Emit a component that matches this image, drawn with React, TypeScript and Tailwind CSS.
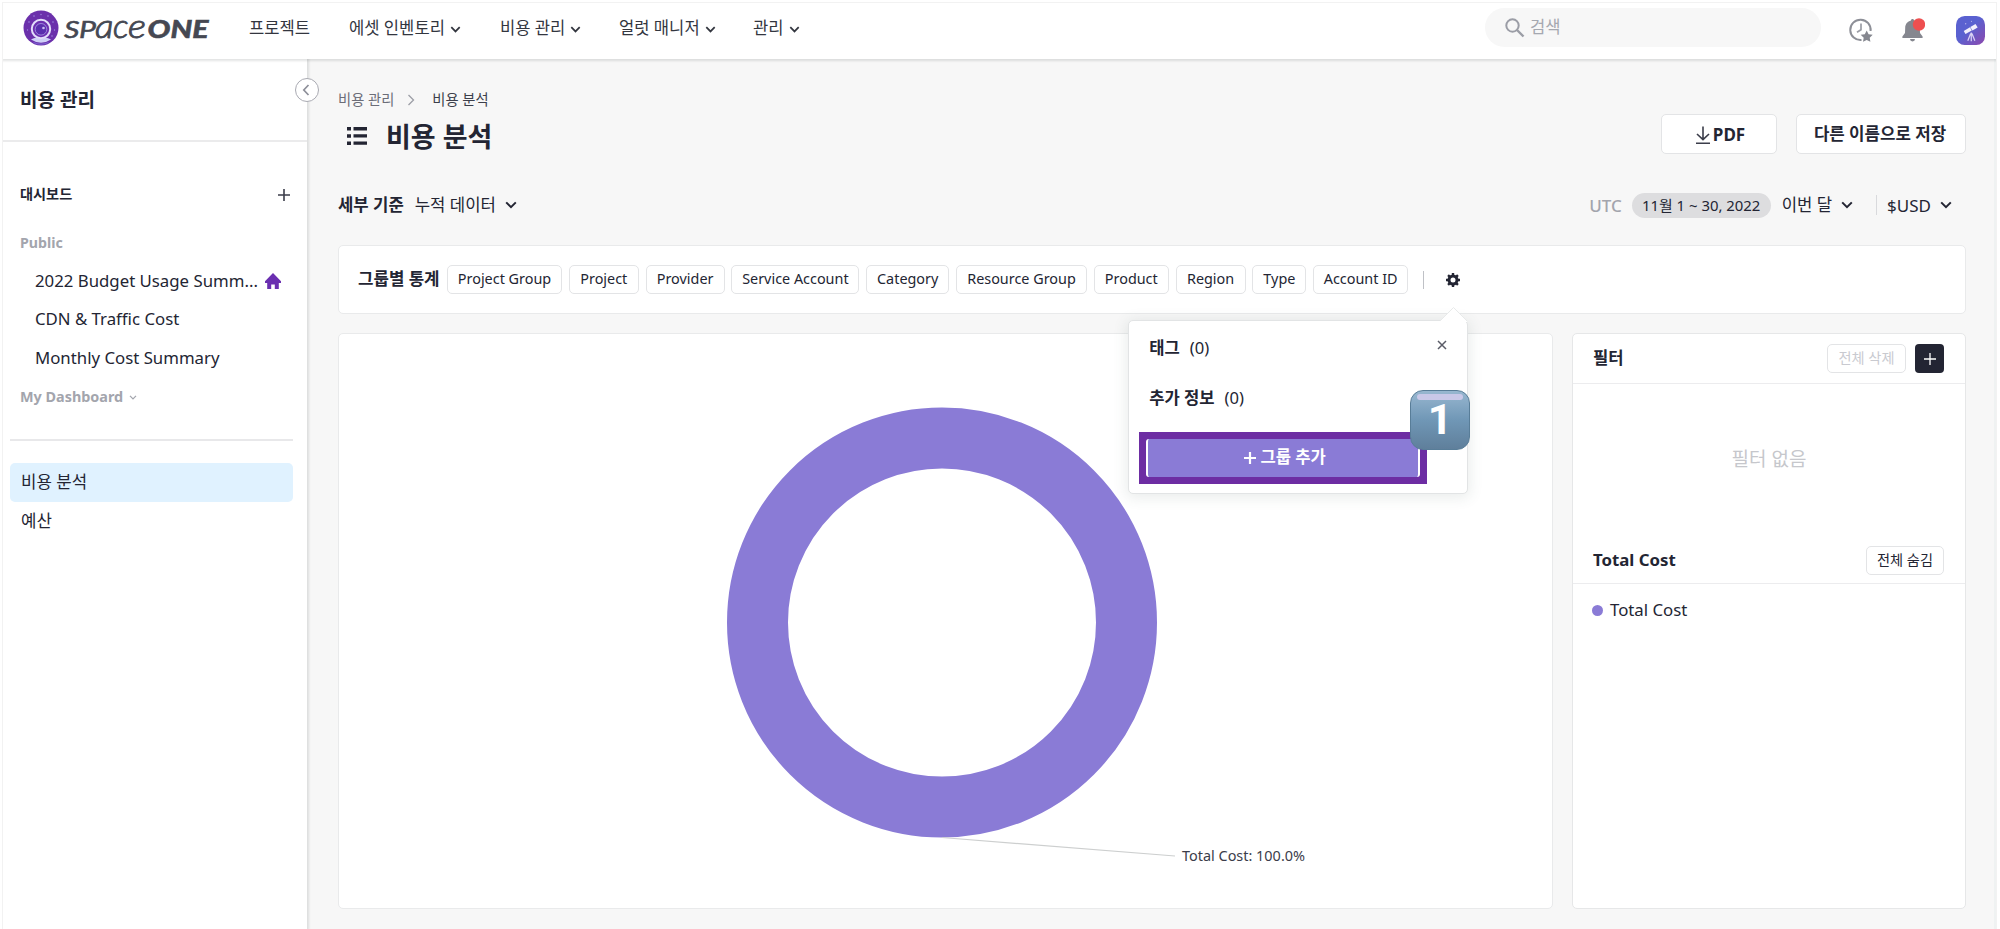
import type { ReactNode } from 'react'
import clsx from 'clsx'

type NavItem = {
  label: string
  className: string
  hasMenu?: boolean
}

const navItems: NavItem[] = [
  { label: '프로젝트', className: 'w-[100px]' },
  { label: '에셋 인벤토리', className: 'w-[151px]', hasMenu: true },
  { label: '비용 관리', className: 'w-[119px]', hasMenu: true },
  { label: '얼럿 매니저', className: 'w-[134px]', hasMenu: true },
  { label: '관리', className: 'w-[60px]', hasMenu: true },
]

const dashboards = ['2022 Budget Usage Summ...', 'CDN & Traffic Cost', 'Monthly Cost Summary']

const groupOptions = [
  { label: 'Project Group', className: 'w-[115px]' },
  { label: 'Project', className: 'w-[70px]' },
  { label: 'Provider', className: 'w-[79px]' },
  { label: 'Service Account', className: 'w-[128px]' },
  { label: 'Category', className: 'w-[83px]' },
  { label: 'Resource Group', className: 'w-[131px]' },
  { label: 'Product', className: 'w-[75px]' },
  { label: 'Region', className: 'w-[70px]' },
  { label: 'Type', className: 'w-[54px]' },
  { label: 'Account ID', className: 'w-[95px]' },
]

function Chevron({ className }: { className?: string }) {
  return (
    <svg viewBox="0 0 12 8" fill="none" className={clsx('shrink-0', className)}>
      <path d="M1.2 1.4 6 6.2l4.8-4.8" stroke="currentColor" strokeWidth="2" />
    </svg>
  )
}

function Logo() {
  return (
    <svg viewBox="0 0 194 40" className="h-10 w-[194px] shrink-0 overflow-visible">
      <circle cx="18" cy="18" r="17.5" fill="#6b30ab" />
      <path d="M8 29.5c5-3 15-3 20 0a17.5 17.5 0 0 1-20 0Z" fill="#cfd0f7" />
      <path d="M10.5 32.5c5 2.300 10 2.300 15 0" stroke="#7b62d0" strokeWidth="1.200" fill="none" />
      <circle cx="18" cy="19" r="9.200" fill="#6b2fb0" stroke="#e3defa" strokeWidth="2" />
      <circle cx="18" cy="19.300" r="5.800" fill="#5a2fae" stroke="#a99be6" strokeWidth="0.800" />
      <circle cx="20.500" cy="18" r="1.300" fill="#c9bff2" />
      <g fill="#9c85de">
        <circle cx="6" cy="12" r="0.800" />
        <circle cx="11" cy="6" r="0.800" />
        <circle cx="18" cy="4.500" r="0.700" />
        <circle cx="25" cy="6" r="0.800" />
        <circle cx="30" cy="12" r="0.800" />
        <circle cx="4.500" cy="20" r="0.700" />
        <circle cx="31.500" cy="20" r="0.700" />
        <circle cx="29" cy="26" r="0.800" />
      </g>
      <g
        fill="#454852"
        stroke="#454852"
        fontFamily="Lato, 'Open Sans', sans-serif"
        fontStyle="italic"
      >
        <g fontSize="23.500" strokeWidth="0.500">
          <text x="41" y="27.500" textLength="15.500" lengthAdjust="spacingAndGlyphs">
            S
          </text>
          <text x="56" y="27.500" textLength="17" lengthAdjust="spacingAndGlyphs">
            P
          </text>
        </g>
        <g fontSize="32.500" fontWeight="300" strokeWidth="0.900">
          <text x="72" y="27.500" textLength="18.500" lengthAdjust="spacingAndGlyphs">
            a
          </text>
          <text x="90" y="27.500" textLength="15.500" lengthAdjust="spacingAndGlyphs">
            c
          </text>
          <text x="105" y="27.500" textLength="18" lengthAdjust="spacingAndGlyphs">
            e
          </text>
        </g>
        <text
          x="124.500"
          y="27.500"
          fontSize="24.500"
          fontWeight="900"
          strokeWidth="0.500"
          textLength="61"
          lengthAdjust="spacingAndGlyphs"
        >
          ONE
        </text>
      </g>
    </svg>
  )
}

function Header() {
  return (
    <header className="relative z-10 flex h-14 shrink-0 bg-white pl-5 shadow-[0_1px_2px_1px_rgba(40,50,50,0.13)]">
      <div className="w-[226px] shrink-0 pt-[7px]">
        <Logo />
      </div>
      <nav className="flex h-[50px] flex-1 items-center text-[16.600px] text-[#33363f]">
        {navItems.map((item) => (
          <a key={item.label} className={clsx('flex items-center whitespace-nowrap', item.className)}>
            {item.label}
            {item.hasMenu && <Chevron className="mt-0.5 ml-[5px] h-[7px] w-[11px]" />}
          </a>
        ))}
      </nav>
      <div className="mt-[5px] flex h-[39px] w-[336px] items-center rounded-full bg-[#f7f7f7] pl-5 text-[16.600px] text-[#a5a8b0]">
        <svg viewBox="0 0 20 20" fill="none" className="mr-[5px] h-5 w-5">
          <circle cx="7.500" cy="7.500" r="6.200" stroke="#9b9da6" strokeWidth="2" />
          <path d="m12 12 6.500 6.500" stroke="#9b9da6" strokeWidth="2.400" />
        </svg>
        검색
      </div>
      <div className="flex h-[54px] w-[175px] items-center pl-7">
        <svg viewBox="0 0 24 24" fill="none" className="h-6 w-6">
          <path d="M12.500 22A10.200 10.200 0 1 1 21.600 13" stroke="#8d8f97" strokeWidth="2" />
          <path d="M12 5.500v6.200l-4 2.600" stroke="#9b9da5" strokeWidth="1.700" />
          <path
            d="m17.700 12.500 1.900 3.700 4.100.6-3 2.900.7 4.100-3.700-1.900-3.700 1.900.7-4.100-3-2.900 4.100-.6Z"
            fill="#85878f"
          />
        </svg>
        <svg viewBox="0 0 24 28" className="ml-[28px] h-7 w-6">
          <path
            d="M11.500 3c-.9 0-1.500.6-1.500 1.400C6.500 5.200 4.300 8 4.200 11.500L4 17l-2.600 3.500V22h20.200v-1.500L19 17l-.2-5.500C18.700 8 16.500 5.200 13 4.400 13 3.600 12.400 3 11.500 3Z"
            fill="#85878f"
          />
          <path d="M9 23h5a2.500 2.500 0 0 1-5 0Z" fill="#85878f" />
          <circle cx="18" cy="8.500" r="6.200" fill="#ee4f50" />
        </svg>
        <svg viewBox="0 0 30 30" className="ml-[31px] h-[29px] w-[29px]">
          <defs>
            <linearGradient id="avatar" x1="0" y1="0" x2="1" y2="1">
              <stop offset="0.450" stopColor="#5a61d0" />
              <stop offset="1" stopColor="#8d48ad" />
            </linearGradient>
          </defs>
          <rect width="30" height="30" rx="9" fill="url(#avatar)" />
          <g fill="#f2effb">
            <path d="m8 15.500 6.500-3.800 1.800 3.200-6.500 3.700Z" />
            <path d="m14.800 11.300 5.400-3.100 2.200 3.800-5.400 3.100Z" />
          </g>
          <path d="M15.800 17v9M15.200 18l-3 7.500M16.500 18l3 7.500" stroke="#d9d2f4" strokeWidth="1.300" />
          <circle cx="10" cy="8" r="0.700" fill="#b6b2ea" />
          <circle cx="16" cy="5.500" r="0.600" fill="#b6b2ea" />
        </svg>
      </div>
    </header>
  )
}

function Sidebar() {
  return (
    <aside className="relative z-[5] flex w-[304px] shrink-0 flex-col bg-white pt-px text-[#232533] shadow-[1px_0_2px_1px_rgba(40,50,50,0.12)]">
      <h2 className="flex h-[82px] items-center border-b-2 border-[#ebebec] pl-[17px] text-[19px] font-bold">
        비용 관리
      </h2>
      <button
        aria-label="접기"
        className="absolute top-[19px] -right-3 flex h-6 w-6 items-center justify-center rounded-full border-[1.5px] border-[#a9aab2] bg-white"
      >
        <svg viewBox="0 0 8 12" fill="none" className="mr-0.5 h-3 w-2">
          <path d="M6.500 1 1.800 6l4.700 5" stroke="#8d8f99" strokeWidth="1.700" />
        </svg>
      </button>

      <div className="mt-[40px] flex h-6 items-center justify-between pr-[17px] pl-[17px]">
        <h3 className="text-[14.200px] font-bold">대시보드</h3>
        <svg viewBox="0 0 12 12" className="mt-0.5 h-3 w-3">
          <path d="M6 0v12M0 6h12" stroke="#3b3d4a" strokeWidth="1.600" />
        </svg>
      </div>
      <p className="mt-[25px] flex h-6 items-center pl-[17px] text-[14.200px] font-bold text-[#a3a5ad]">Public</p>
      <ul className="mt-[7px] text-[16.800px]">
        {dashboards.map((name, index) => (
          <li key={name} className="flex h-[38.500px] items-center whitespace-nowrap pl-8">
            {name}
            {index === 0 && (
              <svg viewBox="0 0 16 16" className="ml-[7px] h-4 w-4" fill="#6a2fb0">
                <path d="M8 0 0 8.200V10h2.200v6h4v-4.500h3.600V16h4v-6H16V8.200Z" />
              </svg>
            )}
          </li>
        ))}
      </ul>
      <p className="mt-2 flex h-6 items-center pl-[17px] text-[14.400px] font-bold text-[#a3a5ad]">
        My Dashboard
        <Chevron className="ml-1.5 h-[5px] w-2" />
      </p>

      <div className="mt-[29px] mr-[14px] ml-[7px] border-t-2 border-[#e8e8ea] pt-[22px] text-[16.800px]">
        <a className="flex h-[39px] items-center rounded-[5px] bg-[#e0f2ff] pl-[11px]">비용 분석</a>
        <a className="flex h-[39px] items-center pl-[11px]">예산</a>
      </div>
    </aside>
  )
}

function OutlineButton({ className, children }: { className?: string; children: ReactNode }) {
  return (
    <button
      className={clsx(
        'flex items-center justify-center rounded-[5px] border-[1.5px] border-[#e3e4e6] bg-white whitespace-nowrap',
        className,
      )}
    >
      {children}
    </button>
  )
}

function PageHeading() {
  return (
    <>
      <nav className="flex h-5 items-center text-[14.300px] text-[#6b6d78]">
        비용 관리
        <svg viewBox="0 0 8 12" fill="none" className="mr-[17px] ml-[13px] h-3 w-2">
          <path d="M1.500 1 6.500 6l-5 5" stroke="#9c9ea6" strokeWidth="1.300" />
        </svg>
        <span className="text-[#3c3f4b]">비용 분석</span>
      </nav>
      <div className="mt-[7px] flex h-[38px] items-center pl-[9px]">
        <svg viewBox="0 0 20 18" className="mr-[19px] h-[18px] w-5" fill="#232533">
          <path d="M0 0h4v3.600H0zM0 7.200h4v3.600H0zM0 14.400h4V18H0zM6.500 0H20v3.400H6.500zM6.500 7.200H20v3.400H6.500zM6.500 14.400H20v3.400H6.500z" />
        </svg>
        <h1 className="flex-1 text-[27px] font-bold">비용 분석</h1>
        <OutlineButton className="-mt-1 mr-[19px] h-10 w-[116px] gap-0.5 pl-0.5 text-[17px] font-bold">
          <svg viewBox="0 0 16 20" fill="none" className="mt-px h-5 w-4">
            <path d="M8 1.500v13M2 9l6 5.700L14 9M1 18.300h14" stroke="#3b3d4a" strokeWidth="1.600" />
          </svg>
          PDF
        </OutlineButton>
        <OutlineButton className="-mt-1 h-10 w-[170px] pr-0.5 text-[16.800px] font-bold">다른 이름으로 저장</OutlineButton>
      </div>
      <div className="mt-[36px] flex h-7 items-center whitespace-nowrap text-[16.700px]">
        <b>세부 기준</b>
        <span className="ml-[11px]">누적 데이터</span>
        <Chevron className="ml-[9px] h-2 w-3" />
        <div className="ml-auto flex items-center pr-[14px]">
          <span className="text-[17px] font-medium text-[#a3a5ad]">UTC</span>
          <span className="ml-[10px] flex h-[25px] w-[139px] items-center justify-center rounded-full bg-[#dddddf] text-[14.900px]">
            11월 1 ~ 30, 2022
          </span>
          <span className="ml-[11px]">이번 달</span>
          <Chevron className="ml-[9px] h-2 w-3" />
          <i className="mr-2.5 ml-[23px] h-5 w-px bg-[#d9dadd]" />
          <span className="text-[17px]">$USD</span>
          <Chevron className="ml-[9px] h-2 w-3" />
        </div>
      </div>
    </>
  )
}

function GroupPopover() {
  return (
    <div className="absolute top-[47px] -right-2 z-20 h-[174px] w-[340px] rounded-[5px] border border-[#e2e4e5] bg-white text-[16.600px] shadow-[0_2px_14px_2px_rgba(60,90,80,0.11)]">
      <svg viewBox="0 0 28 15" className="absolute -top-[14px] -right-px h-[15px] w-7">
        <path d="M0 14 13.500 0 27 14v1H0Z" fill="white" />
        <path d="M0 14 13.500.5 27 14" fill="none" stroke="#e8eaea" strokeWidth="1" />
      </svg>
      <svg viewBox="0 0 10 10" className="absolute top-[19px] right-[20px] h-2.5 w-2.5">
        <path d="m1 1 8 8M9 1 1 9" stroke="#5a5c67" strokeWidth="1.500" />
      </svg>
      <p className="mt-[15px] flex h-[26px] items-center pl-5">
        <b className="mr-[10px]">태그</b> (0)
      </p>
      <p className="mt-6 flex h-[26px] items-center pl-5">
        <b className="mr-[10px]">추가 정보</b> (0)
      </p>
      <div className="mt-5 ml-2.5 h-[52px] w-[288px] bg-[#6d2da3] p-[7px]">
        <button className="flex h-[38px] w-[274px] items-center justify-center rounded-[3px] border-x-2 border-white bg-[#8a7bd6] pl-1 font-bold text-white">
          <svg viewBox="0 0 12 12" className="mr-1 h-3 w-3">
            <path d="M6 0v12M0 6h12" stroke="white" strokeWidth="2.200" />
          </svg>
          그룹 추가
        </button>
      </div>
      <span className="absolute top-[69px] -right-[3px] flex h-[60px] w-[60px] items-center justify-center rounded-[13px] border-[1.5px] border-[#587d98] bg-linear-to-b from-[#98b7d0] via-[#7097b6] to-[#5f7f9b] font-[Roboto,sans-serif] text-[43px] font-bold text-white">
        <i className="absolute top-[3px] right-1.5 left-1.5 h-1.5 rounded-full bg-[#c9c8e8]" />
        1
      </span>
    </div>
  )
}

function GroupBar() {
  return (
    <section className="mt-[26px] flex h-[69px] items-center rounded-[5px] border border-[#e9eaeb] bg-white pl-[19px]">
      <b className="w-[89px] whitespace-nowrap text-[16.800px]">그룹별 통계</b>
      <div className="flex gap-[6.800px]">
        {groupOptions.map((option) => (
          <OutlineButton key={option.label} className={clsx('h-[29px] text-[14.400px]', option.className)}>
            {option.label}
          </OutlineButton>
        ))}
      </div>
      <i className="mr-[22px] ml-[15px] h-[18px] w-px bg-[#bfc1c6]" />
      <div className="relative h-[14px] w-[14px]">
        <svg viewBox="0 0 14 14" className="h-[14px] w-[14px]">
          <circle cx="7" cy="7" r="4" fill="none" stroke="#232533" strokeWidth="3" />
          <path
            d="M5.800 0h2.400v2.500H5.800zM5.800 11.500h2.400V14H5.800zM0 5.800h2.500v2.400H0zM11.500 5.800H14v2.400h-2.500zM1.200 2.900l1.700-1.700 1.700 1.700-1.700 1.700zM9.400 2.900l1.700-1.700 1.700 1.700-1.700 1.700zM1.200 11.100l1.700-1.700 1.700 1.700-1.700 1.700zM9.400 11.100l1.700-1.700 1.700 1.700-1.700 1.700z"
            fill="#232533"
          />
        </svg>
        <GroupPopover />
      </div>
    </section>
  )
}

function CostChart() {
  return (
    <section className="h-[576px] w-[1215px] rounded-[5px] border border-[#e9eaeb] bg-white">
      <svg viewBox="0 0 1213 574" className="h-[574px] w-[1213px]">
        <circle cx="603" cy="288.500" r="184.500" fill="none" stroke="#8a7bd6" strokeWidth="61" />
        <path d="M603 503.500 836 522" stroke="#cdcfcf" strokeWidth="1.200" />
        <text
          x="843"
          y="526.500"
          fontSize="14.300"
          fill="#3b3d4a"
          textLength="123"
          lengthAdjust="spacingAndGlyphs"
        >
          Total Cost: 100.0%
        </text>
      </svg>
    </section>
  )
}

function FilterPanel() {
  return (
    <section className="h-[576px] w-[394px] rounded-[5px] border border-[#e6e7e8] bg-white">
      <div className="flex h-[50px] items-center border-b border-[#ececee] pr-[21px] pl-5">
        <b className="flex-1 text-[16.600px]">필터</b>
        <OutlineButton className="mr-[9px] h-[29px] w-[79px] text-[14.200px] text-[#c9cad0]">전체 삭제</OutlineButton>
        <button aria-label="필터 추가" className="flex h-[29px] w-[29px] items-center justify-center rounded-[4px] bg-[#232533]">
          <svg viewBox="0 0 12 12" className="h-3 w-3">
            <path d="M6 0v12M0 6h12" stroke="white" strokeWidth="1.300" />
          </svg>
        </button>
      </div>
      <div className="flex h-[151px] items-center justify-center text-[19px] text-[#c6c7cc]">필터 없음</div>
      <div className="flex h-[49px] items-center border-b border-[#ececee] pt-0.5 pr-[21px] pl-5">
        <b className="flex-1 text-[16.800px]">Total Cost</b>
        <OutlineButton className="h-[29px] w-[78px] text-[14.200px]">전체 숨김</OutlineButton>
      </div>
      <div className="mt-[14px] flex h-6 items-center pl-[19px] text-[16.800px]">
        <i className="mr-[7px] h-[11px] w-[11px] rounded-full bg-[#8a7bd6]" />
        Total Cost
      </div>
    </section>
  )
}

export default function App() {
  return (
    <div className="h-[929px] w-[2000px] overflow-hidden bg-white pt-[2px] pl-[2px] font-['Noto_Sans','Noto_Sans_CJK_KR',sans-serif] leading-none text-[#232533]">
      <div className="flex h-[927px] w-[1995px] flex-col overflow-hidden border-t border-r border-l border-[#f2f2f2]">
        <Header />
        <div className="flex min-h-0 flex-1">
          <Sidebar />
          <main className="flex-1 border-r-2 border-[#eff2f2] bg-[#f7f7f7] pt-[31px] pl-[31px]">
            <div className="w-[1628px]">
              <PageHeading />
              <GroupBar />
              <div className="mt-[19px] flex gap-[19px]">
                <CostChart />
                <FilterPanel />
              </div>
            </div>
          </main>
        </div>
      </div>
    </div>
  )
}
